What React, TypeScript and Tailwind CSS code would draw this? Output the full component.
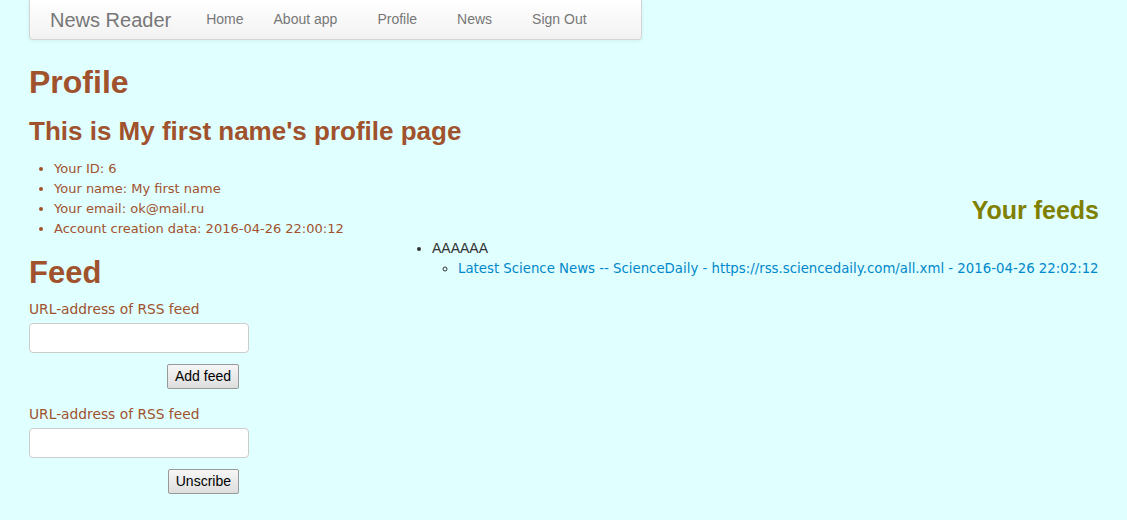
const comic = "font-['Comic_Sans_MS','DejaVu_Sans',sans-serif]";
const heading = "font-['Comic_Sans_MS','Liberation_Sans',Arial,sans-serif]";

const navLinks = [
  { label: 'Home', ml: 'ml-[35px]' },
  { label: 'About app', ml: 'ml-[30px]' },
  { label: 'Profile', ml: 'ml-[40px]' },
  { label: 'News', ml: 'ml-[40px]' },
  { label: 'Sign Out', ml: 'ml-[40px]' },
];

const profileInfo = [
  'Your ID: 6',
  'Your name: My first name',
  'Your email: ok@mail.ru',
  'Account creation data: 2016-04-26 22:00:12',
];

function Navbar() {
  return (
    <nav className="flex h-10 w-[613px] items-center rounded-b-[4px] border border-t-0 border-[#d4d4d4] bg-gradient-to-b from-white to-[#f2f2f2] pl-[20px] font-['Liberation_Sans',Arial,sans-serif] text-[#777] shadow-[0_1px_4px_rgba(0,0,0,0.065)]">
      <span className="text-[20px]">News Reader</span>
      {navLinks.map((l) => (
        <a key={l.label} href="#" className={`${l.ml} text-[14px] text-[#777]`}>
          {l.label}
        </a>
      ))}
    </nav>
  );
}

function FeedForm({ button }: { button: string }) {
  return (
    <form className="w-[220px]">
      <label className={`block text-[13.8px] leading-5 text-[#a0522d] ${comic}`}>
        URL-address of RSS feed
      </label>
      <input
        type="text"
        className="mt-[4px] block h-[30px] w-[220px] rounded-[4px] border border-[#ccc] bg-white px-2"
      />
      <div className="mt-[11px] flex justify-end pr-[10px]">
        <button
          type="button"
          className="h-[25px] rounded-[2px] border border-[#999] bg-gradient-to-b from-[#f6f6f6] to-[#dedede] px-[7px] font-['Liberation_Sans',Arial,sans-serif] text-[14px] text-black"
        >
          {button}
        </button>
      </div>
    </form>
  );
}

export default function App() {
  return (
    <div className="min-h-screen bg-[#e0ffff]">
      <div className="pl-[29px] pr-[28px]">
        <Navbar />

        <h1 className={`mt-[22px] text-[32px] leading-10 font-bold text-[#a0522d] ${heading}`}>Profile</h1>
        <h3 className={`mt-[9px] text-[26px] leading-10 font-bold text-[#a0522d] ${heading}`}>
          This is My first name's profile page
        </h3>

        <div className="flex">
          <div className="w-[370px] shrink-0">
            <ul className={`mt-[8px] list-disc pl-[25px] text-[13px] leading-5 text-[#a0522d] ${comic}`}>
              {profileInfo.map((t) => (
                <li key={t}>{t}</li>
              ))}
            </ul>

            <h2 className={`mt-[14px] text-[31px] leading-10 font-bold text-[#a0522d] ${heading}`}>Feed</h2>
            <div className="mt-[6px]">
              <FeedForm button="Add feed" />
            </div>
            <div className="mt-[15px]">
              <FeedForm button="Unscribe" />
            </div>
          </div>

          <div className="flex-1 pt-[39px]">
            <h3 className={`text-right text-[25px] leading-10 font-bold text-[#808000] ${heading}`}>Your feeds</h3>
            <ul className="mt-[8px] list-disc pl-[33px] font-['Liberation_Sans',Arial,sans-serif] text-[14px] leading-5 text-[#333]">
              <li>
                AAAAAA
                <ul className="list-[circle] pl-[26px]">
                  <li>
                    <a href="#" className={`text-[13.3px] text-[#0088cc] ${comic}`}>
                      Latest Science News -- ScienceDaily - https://rss.sciencedaily.com/all.xml - 2016-04-26 22:02:12
                    </a>
                  </li>
                </ul>
              </li>
            </ul>
          </div>
        </div>
      </div>
    </div>
  );
}
